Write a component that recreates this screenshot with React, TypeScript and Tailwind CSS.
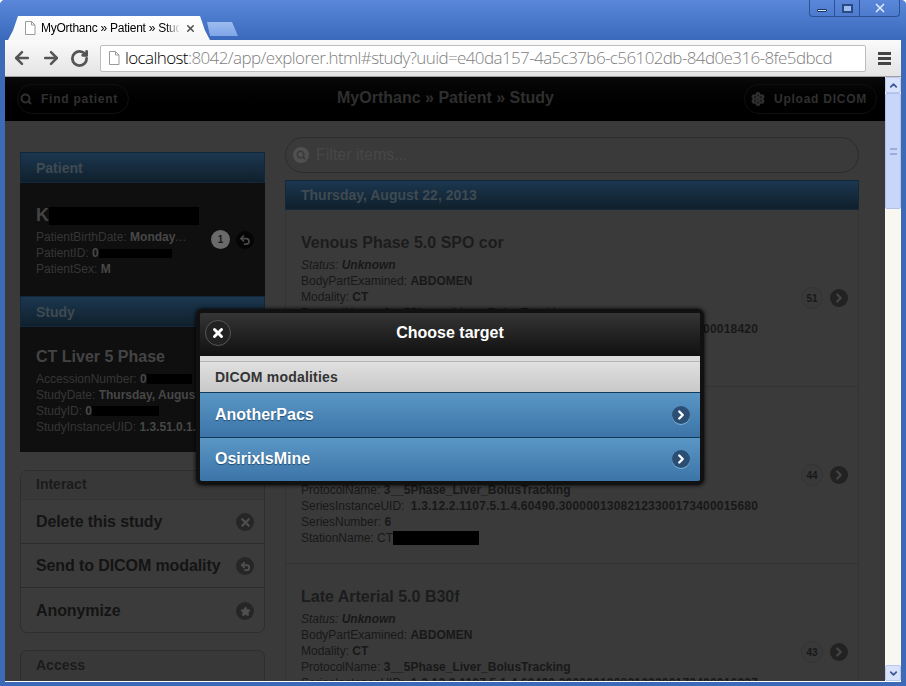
import { ArrowLeft, ArrowRight, ChevronDown, ChevronRight, ChevronUp, RotateCw, Search, Settings, Star, Undo2, X } from 'lucide-react';
import type { ReactNode } from 'react';

type Series = {
  title: string;
  count: number;
  uid: string;
  number: string;
};

const series: Series[] = [
  { title: 'Venous Phase 5.0 SPO cor', count: 51, uid: '1.3.12.2.1107.5.1.4.60490.30000013082123300173400018420', number: '7' },
  { title: 'Early Arterial 5.0 B30f', count: 44, uid: '1.3.12.2.1107.5.1.4.60490.30000013082123300173400015680', number: '6' },
  { title: 'Late Arterial 5.0 B30f', count: 43, uid: '1.3.12.2.1107.5.1.4.60490.30000013082123300173400016037', number: '5' },
];

function Redacted({ className }: { className: string }) {
  return <span className={`inline-block bg-black align-middle ${className}`} />;
}

function DocIcon({ className }: { className: string }) {
  return (
    <svg viewBox="0 0 12 14" className={className} fill="none">
      <path d="M1.5.5h6l3.5 3.5v9.500h-9.500z" fill="#fff" stroke="#9a9a9a" />
      <path d="M7.500.5v3.500h3.500" stroke="#9a9a9a" />
    </svg>
  );
}

function Field({ name, children, wide }: { name: string; children: ReactNode; wide?: boolean }) {
  return (
    <div className="h-[16px] truncate text-[12px] leading-[16px]">
      {name}: <b className={wide ? 'ml-[3px] tracking-[0.2px]' : ''}>{children}</b>
    </div>
  );
}

function SeriesRow({ item }: { item: Series }) {
  return (
    <div className="flex h-[177px] items-center justify-between border-b border-[#333] pr-[10px] pl-[15px] text-[#181818]">
      <div className="pt-[6px]">
        <h3 className="mb-[4px] text-[16px] leading-[20px] font-bold text-[#1c1c1c]">{item.title}</h3>
        <div className="h-[16px] text-[12px] leading-[16px] italic">
          Status: <b>Unknown</b>
        </div>
        <Field name="BodyPartExamined">ABDOMEN</Field>
        <Field name="Modality">CT</Field>
        <Field name="ProtocolName">3__5Phase_Liver_BolusTracking</Field>
        <Field name="SeriesInstanceUID" wide>
          {item.uid}
        </Field>
        <Field name="SeriesNumber">{item.number}</Field>
        <div className="flex h-[17px] items-center text-[12px]">
          StationName: CT
          <Redacted className="h-[14px] w-[86px]" />
        </div>
      </div>
      <div className="flex items-center gap-[7px]">
        <span className="flex h-[22px] w-[22px] items-center justify-center rounded-full border border-[#343434] bg-[#393939] text-[10px] font-bold">
          {item.count}
        </span>
        <span className="flex h-[18px] w-[18px] items-center justify-center rounded-full bg-[#222]">
          <ChevronRight size={14} strokeWidth={4} className="text-[#444]" />
        </span>
      </div>
    </div>
  );
}

function ActionRow({ label, icon, last }: { label: string; icon: ReactNode; last?: boolean }) {
  return (
    <div className={`flex h-[44px] items-center justify-between pr-[10px] pl-[15px] ${last ? 'pt-[1px]' : 'border-b border-[#2b2b2b]'}`}>
      <span className="text-[16px] font-bold tracking-[-0.1px] text-[#141414]">{label}</span>
      <span className="mt-[1px] flex h-[18px] w-[18px] items-center justify-center rounded-full bg-[#262626]">{icon}</span>
    </div>
  );
}

function TargetRow({ label }: { label: string }) {
  return (
    <div className="flex h-[44.500px] items-center justify-between border-t border-[#0f3a5c] bg-gradient-to-b from-[#5a97c5] to-[#3c74a8] pr-[10px] pl-[15px]">
      <span className="text-[16px] font-bold text-white [text-shadow:0_1px_1px_#1c4a70]">{label}</span>
      <span className="flex h-[18px] w-[18px] items-center justify-center rounded-full bg-[#2b4f74] shadow-[0_1px_0_#7fb0d5]">
        <ChevronRight size={14} strokeWidth={4} className="text-white" />
      </span>
    </div>
  );
}

function PanelHead({ children }: { children: ReactNode }) {
  return (
    <div className="flex h-[31px] items-center border border-[#12283a] bg-gradient-to-b from-[#1b3750] to-[#10202c] pt-[1px] pl-[15px] text-[14px] font-bold text-[#3f4a52]">
      {children}
    </div>
  );
}

export default function App() {
  return (
    <div className="relative flex h-[686px] w-[906px] flex-col overflow-hidden rounded-t-[5px] bg-[#3d6ab8] font-['Liberation_Sans',sans-serif]">
      {/* Title bar */}
      <div className="flex h-[40px] shrink-0 justify-between bg-gradient-to-b from-[#5a87da] to-[#3a69bb]">
        <div className="flex items-end pl-[8px]">
          <div className="flex h-[24px] w-[202px] items-center gap-[5px] bg-gradient-to-b from-white to-[#f6f6f6] pr-[13px] pl-[16px] [clip-path:polygon(0_100%,5px_60%,10px_0,192px_0,197px_60%,202px_100%)]">
            <DocIcon className="h-[14px] w-[12px] shrink-0" />
            <span className="w-[139px] overflow-hidden text-[12px] tracking-[-0.25px] whitespace-nowrap text-black [mask-image:linear-gradient(to_right,black_90%,transparent)]">
              MyOrthanc » Patient » Study
            </span>
            <X size={11} strokeWidth={3.500} className="shrink-0 text-[#555]" />
          </div>
          <div className="mb-[4px] ml-[-3px] h-[14px] w-[31px] bg-gradient-to-b from-[#9dbdf0] to-[#7fa5e6] [clip-path:polygon(0_0,25px_0,31px_100%,3px_100%)]" />
        </div>
        <div className="mr-[6px] flex h-[17px] w-[91px] items-center rounded-b-[4px] border border-t-0 border-[#2c5296] text-[#dbe6f8]">
          <span className="flex h-full w-[25px] items-end justify-center border-r border-[#2c5296] pb-[4px]">
            <span className="h-[3px] w-[10px] rounded-[1px] border border-[#1c3560] bg-[#dbe6f8]" />
          </span>
          <span className="flex h-full w-[25px] items-center justify-center border-r border-[#2c5296]">
            <span className="h-[9px] w-[11px] border-2 border-[#2a4a85] bg-[#9dbdf0]" />
          </span>
          <span className="flex h-full flex-1 items-center justify-center">
            <X size={14} strokeWidth={3} />
          </span>
        </div>
      </div>

      {/* Browser toolbar */}
      <div className="mx-[5px] flex h-[37px] shrink-0 items-center border-b border-[#a0a0a0] bg-gradient-to-b from-[#fafafa] to-[#e4e4e4]">
        <div className="flex w-[95px] items-center gap-[9px] pl-[7px] text-[#555]">
          <ArrowLeft size={20} strokeWidth={3} />
          <ArrowRight size={20} strokeWidth={3} />
          <RotateCw size={19} strokeWidth={3.500} />
        </div>
        <div className="flex h-[27px] w-[766px] items-center gap-[5px] rounded-[2px] border border-[#bdbdbd] bg-white pl-[7px] text-[17px] font-light whitespace-nowrap text-[#808080] font-['Open_Sans',sans-serif]">
          <DocIcon className="h-[14px] w-[12px] shrink-0" />
          <span className="tracking-[-0.6px]">
            <span className="text-black">localhost</span>:8042/app/explorer.html#study?uuid=e40da157-4a5c37b6-c56102db-84d0e316-8fe5dbcd
          </span>
        </div>
        <div className="ml-[12px] flex flex-col gap-[2px]">
          <span className="h-[3px] w-[13px] bg-[#444]" />
          <span className="h-[3px] w-[13px] bg-[#444]" />
          <span className="h-[3px] w-[13px] bg-[#444]" />
        </div>
      </div>

      {/* Page + scrollbar */}
      <div className="mx-[5px] mb-[4px] flex min-h-0 flex-1 border-b border-white">
        <div className="flex min-w-0 flex-1 flex-col overflow-hidden bg-[#3a3a3a]">
          <header className="flex h-[44px] shrink-0 items-center justify-between bg-black bg-gradient-to-b from-[#0a0a0a] to-black pr-[8px] pl-[12px]">
            <div className="flex h-[30px] items-center gap-[9px] rounded-full border border-[#101010] pr-[10px] pl-[2px] text-[12px] font-bold tracking-[0.75px] text-[#303030]">
              <Search size={12} strokeWidth={4} />
              Find patient
            </div>
            <h1 className="ml-[18px] pb-[2px] text-[16px] font-bold text-[#2f2f2f]">MyOrthanc » Patient » Study</h1>
            <div className="flex h-[30px] items-center gap-[9px] rounded-full border border-[#101010] pr-[9px] pl-[6px] text-[12px] font-bold tracking-[0.75px] text-[#303030]">
              <Settings size={14} strokeWidth={4} />
              Upload DICOM
            </div>
          </header>

          <div className="flex min-h-0 flex-1 gap-[20px] pr-[26px] pl-[15px]">
            {/* Left column */}
            <aside className="w-[245px] shrink-0 pt-[31px]">
              <div className="bg-[#0f0f0f] text-[#363636]">
                <PanelHead>Patient</PanelHead>
                <div className="flex h-[113px] items-center justify-between pr-[11px] pl-[16px]">
                  <div className="w-[168px]">
                    <div className="flex items-center text-[18px] font-bold text-[#444]">
                      K
                      <Redacted className="h-[18px] w-[150px]" />
                    </div>
                    <div className="h-[16px] w-[152px] truncate text-[12px] leading-[16px]">
                      PatientBirthDate: <b className="text-[#474747]">Monday, August 5, 1946</b>
                    </div>
                    <div className="flex h-[16px] items-center text-[12px] whitespace-nowrap">
                      PatientID:&nbsp;<b className="text-[#474747]">0</b>
                      <Redacted className="h-[9px] w-[73px]" />
                    </div>
                    <div className="h-[16px] text-[12px] leading-[16px]">
                      PatientSex: <b className="text-[#474747]">M</b>
                    </div>
                  </div>
                  <div className="flex items-center gap-[6px]">
                    <span className="flex h-[19px] w-[19px] items-center justify-center rounded-full bg-[#6a6a6a] text-[10px] font-bold text-[#1a1a1a]">
                      1
                    </span>
                    <span className="flex h-[18px] w-[18px] items-center justify-center rounded-full bg-[#050505]">
                      <Undo2 size={12} strokeWidth={3.500} className="text-[#4a4a4a]" />
                    </span>
                  </div>
                </div>
                <PanelHead>Study</PanelHead>
                <div className="flex h-[125px] flex-col justify-center pl-[16px]">
                  <div className="mb-[2px] text-[16px] font-bold text-[#444]">CT Liver 5 Phase</div>
                  <div className="flex h-[16px] items-center text-[12px]">
                    AccessionNumber:&nbsp;<b className="text-[#474747]">0</b>
                    <Redacted className="h-[10px] w-[45px]" />
                  </div>
                  <div className="h-[16px] truncate text-[12px] leading-[16px]">
                    StudyDate: <b className="text-[#474747]">Thursday, August 22, 2013</b>
                  </div>
                  <div className="flex h-[16px] items-center text-[12px]">
                    StudyID:&nbsp;<b className="text-[#474747]">0</b>
                    <Redacted className="h-[10px] w-[67px]" />
                  </div>
                  <div className="h-[16px] truncate text-[12px] leading-[16px]">
                    StudyInstanceUID: <b className="text-[#474747]">1.3.51.0.1.1.10.143.20.159</b>
                  </div>
                </div>
              </div>

              <div className="mt-[18px] overflow-hidden rounded-[7px] border border-[#2e2e2e] bg-[#3b3b3b]">
                <div className="flex h-[29px] items-center border-b border-[#333] bg-[#383838] pb-[2px] pl-[15px] text-[14px] font-bold text-[#1b1b1b]">
                  Interact
                </div>
                <ActionRow label="Delete this study" icon={<X size={13} strokeWidth={4} className="text-[#505050]" />} />
                <ActionRow label="Send to DICOM modality" icon={<Undo2 size={11} strokeWidth={4} className="text-[#505050]" />} />
                <ActionRow label="Anonymize" icon={<Star size={11} fill="#505050" className="text-[#505050]" />} last />
              </div>

              <div className="mt-[17px] h-[60px] rounded-[7px] border border-[#2e2e2e] bg-[#383838] pt-[4px] pl-[15px] text-[14px] font-bold text-[#1b1b1b]">
                Access
              </div>
            </aside>

            {/* Right column */}
            <main className="min-w-0 flex-1 pt-[16px]">
              <div className="mb-[7px] flex h-[36px] items-center gap-[7px] rounded-full border border-[#2d2d2d] bg-[#3a3a3a] pl-[7px] text-[16px] text-[#474747]">
                <span className="flex h-[16px] w-[16px] items-center justify-center rounded-full bg-[#505050]">
                  <Search size={10} strokeWidth={4} className="text-[#3a3a3a]" />
                </span>
                Filter items...
              </div>
              <div className="flex h-[30px] items-center border border-[#12283a] bg-gradient-to-b from-[#1b3750] to-[#10202c] pl-[15px] text-[14px] font-bold text-[#3f4a52]">
                Thursday, August 22, 2013
              </div>
              <div className="border-x border-[#333]">
                {series.map((item) => (
                  <SeriesRow key={item.count} item={item} />
                ))}
              </div>
            </main>
          </div>
        </div>

        {/* Scrollbar */}
        <div className="flex w-[16px] shrink-0 flex-col bg-[#f8f8f0]">
          <div className="flex h-[16px] items-center justify-center rounded-[2px] border border-[#b8c8ee] bg-[#d8e3fb]">
            <ChevronUp size={11} strokeWidth={4} className="text-[#3d5a99]" />
          </div>
          <div className="flex h-[116px] items-center justify-center rounded-[2px] border border-[#b0c0ea] bg-[#c8d6fa]">
            <span className="h-[7px] w-[7px] border-y-2 border-[#9aaedd]" />
          </div>
          <div className="flex-1" />
          <div className="flex h-[16px] items-center justify-center rounded-[2px] border border-[#b8c8ee] bg-[#d8e3fb]">
            <ChevronDown size={11} strokeWidth={4} className="text-[#3d5a99]" />
          </div>
        </div>
      </div>

      {/* Choose target popup */}
      <div className="absolute top-[309px] left-[196px] w-[508px] overflow-hidden rounded-[6px] border-[4px] border-[#111] shadow-[0_0_4px_#000]">
        <div className="relative flex h-[43px] items-center justify-center bg-gradient-to-b from-[#353535] to-[#111] pb-[4px] text-[16px] font-bold text-white">
          <span className="absolute top-[7px] left-[5px] flex h-[26px] w-[26px] items-center justify-center rounded-full border border-[#555] bg-[#222]">
            <X size={14} strokeWidth={5} />
          </span>
          Choose target
        </div>
        <div className="h-[6px] border-b border-[#b5b5b5] bg-[#dcdcdc]" />
        <div className="flex h-[30px] items-center bg-gradient-to-b from-[#e0e0e0] to-[#c8c8c8] pt-[1px] pl-[15px] text-[14px] font-bold tracking-[0.2px] text-[#333]">
          DICOM modalities
        </div>
        <TargetRow label="AnotherPacs" />
        <TargetRow label="OsirixIsMine" />
      </div>
    </div>
  );
}
